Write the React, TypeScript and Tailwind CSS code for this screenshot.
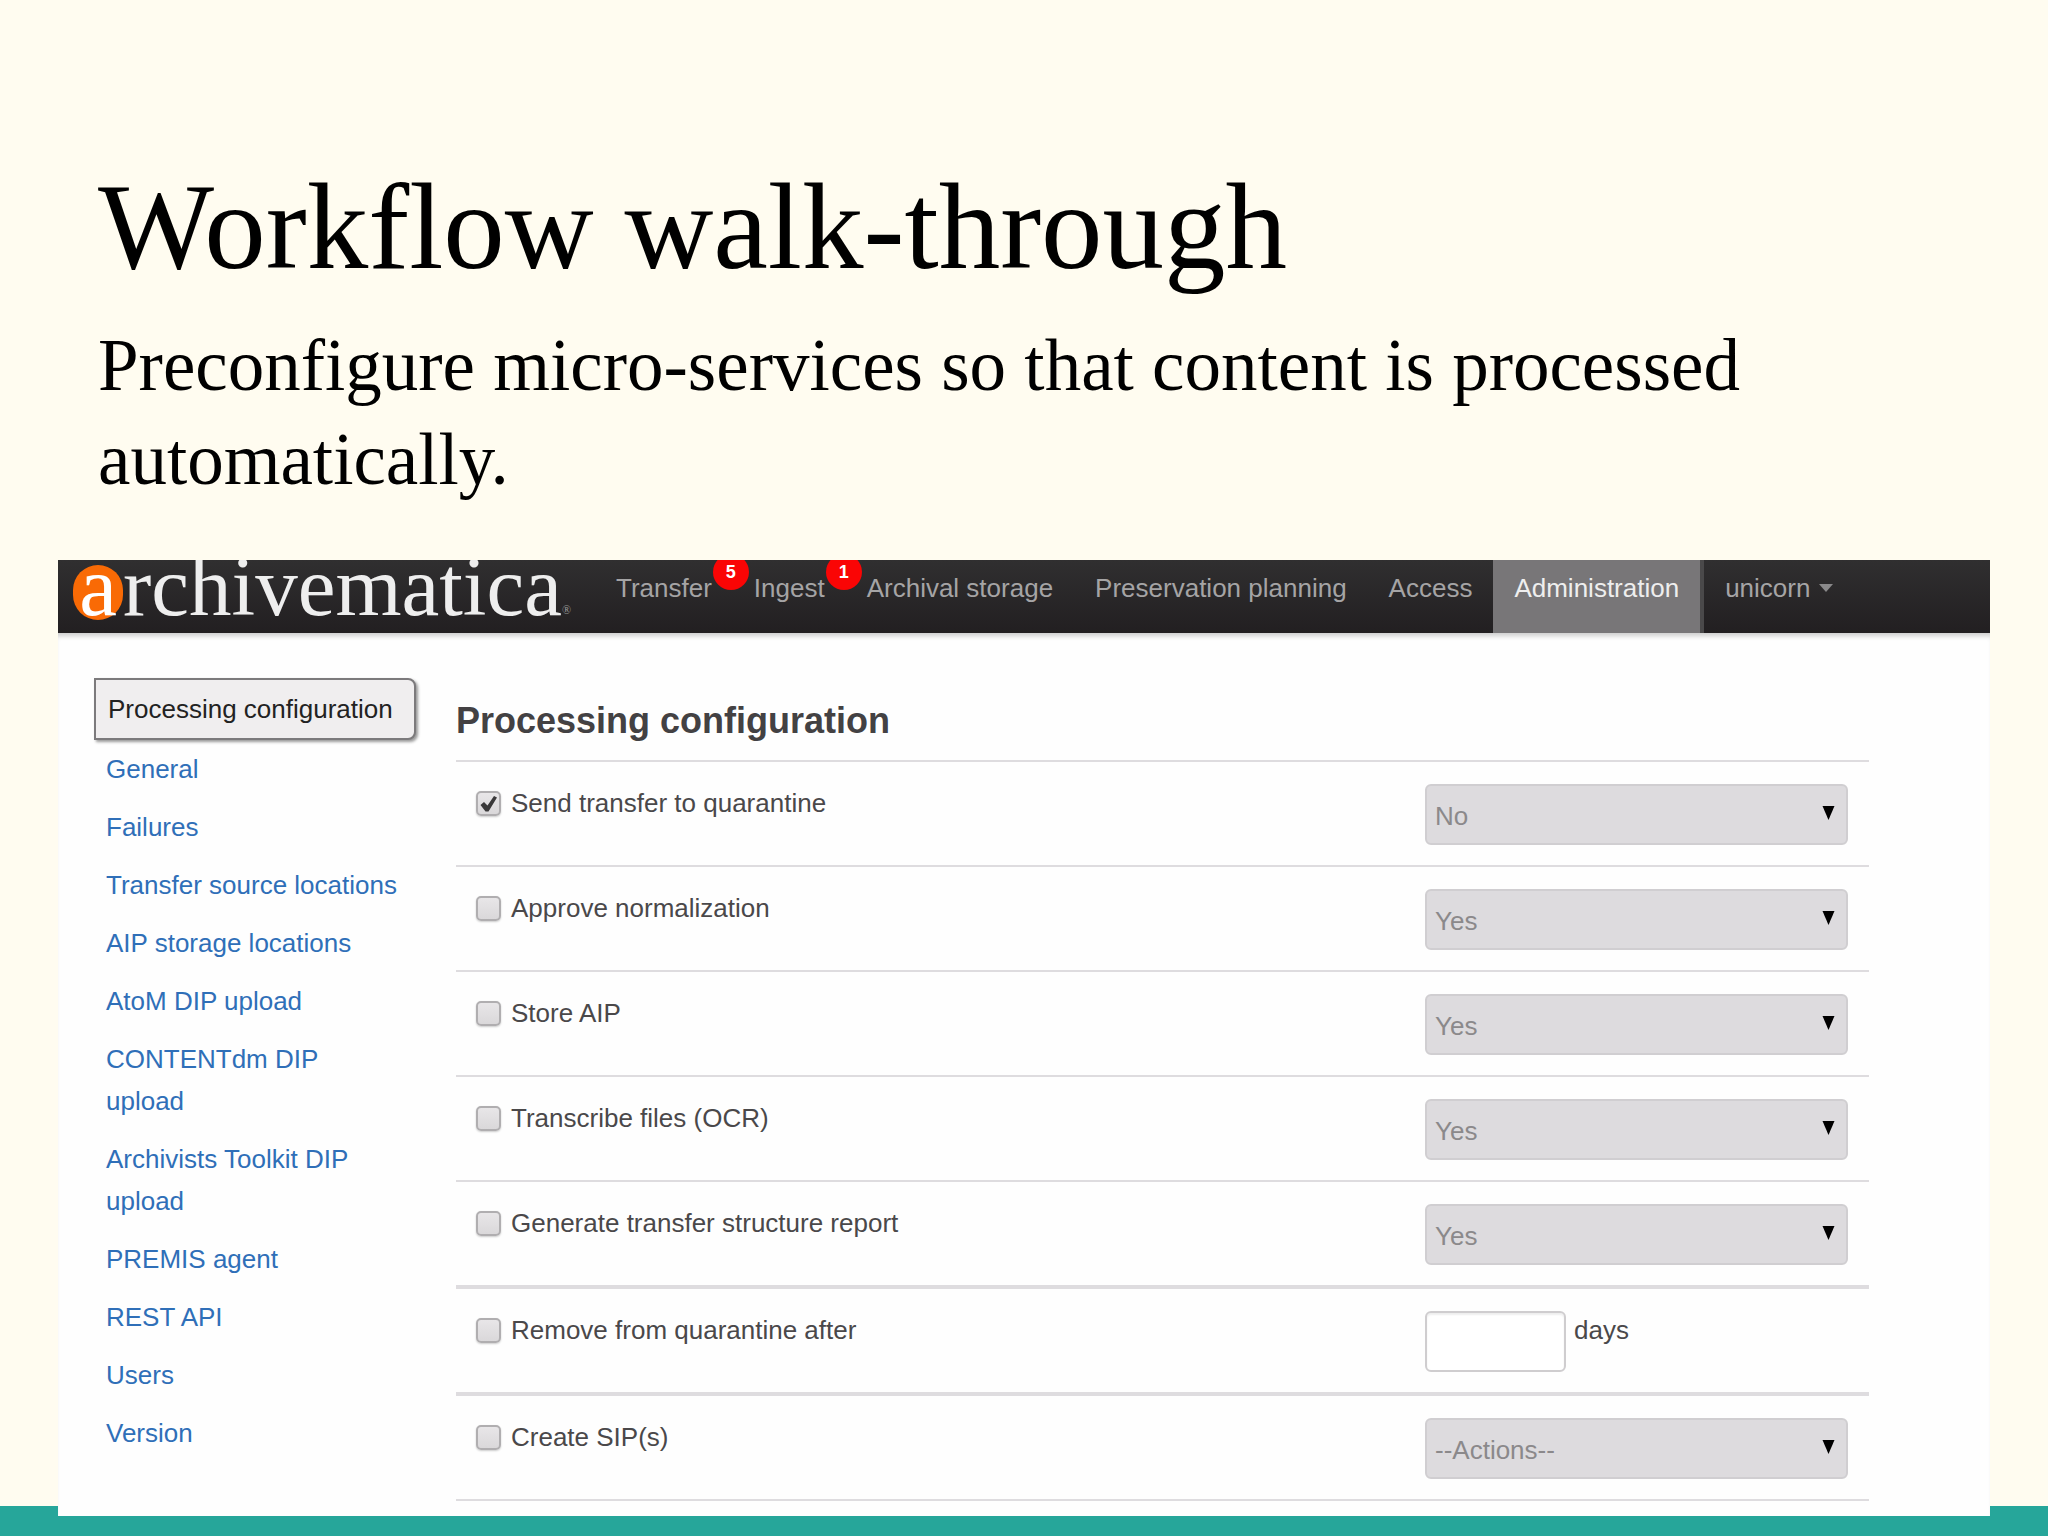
import { useState } from "react";

interface NavItem {
    label: string;
    badge?: number;
    active?: boolean;
}

interface Setting {
    id: string;
    label: string;
    value?: string;
    days?: boolean;
    checked?: boolean;
    thick?: boolean;
}

const navItems: NavItem[] = [
    { label: "Transfer", badge: 5 },
    { label: "Ingest", badge: 1 },
    { label: "Archival storage" },
    { label: "Preservation planning" },
    { label: "Access" },
    { label: "Administration", active: true },
];

const sideLinks = [
    "General",
    "Failures",
    "Transfer source locations",
    "AIP storage locations",
    "AtoM DIP upload",
    "CONTENTdm DIP upload",
    "Archivists Toolkit DIP upload",
    "PREMIS agent",
    "REST API",
    "Users",
    "Version",
];

const settings: Setting[] = [
    { id: "quarantine", label: "Send transfer to quarantine", value: "No", checked: true },
    { id: "normalization", label: "Approve normalization", value: "Yes" },
    { id: "store-aip", label: "Store AIP", value: "Yes" },
    { id: "ocr", label: "Transcribe files (OCR)", value: "Yes" },
    { id: "report", label: "Generate transfer structure report", value: "Yes", thick: true },
    { id: "remove", label: "Remove from quarantine after", days: true, thick: true },
    { id: "create-sip", label: "Create SIP(s)", value: "--Actions--" },
];

function Logo() {
    return (
        <a
            href="#"
            className="flex h-[73px] w-[537px] shrink-0 items-start pl-[15px] font-['Liberation_Serif',serif] text-[85px] leading-[52px] text-[#eeeeee]"
        >
            <span className="relative flex w-[50px] justify-center">
                <span className="absolute top-[5px] left-0 h-[55px] w-[50px] rounded-full bg-[#f96a05]" />
                <span className="relative text-white">a</span>
            </span>
            <span>rchivematica</span>
            <span className="pt-[42px] text-[12px] leading-4 text-[#999999]">®</span>
        </a>
    );
}

function TopNav() {
    return (
        <header className="relative flex h-[73px] overflow-hidden bg-linear-to-b from-[#302f30] to-[#221f21]">
            <Logo />
            <nav className="flex">
                <ul className="flex text-[26px] leading-[56px] whitespace-nowrap text-[#a5a4a5]">
                    {navItems.map((item) => (
                        <li
                            key={item.label}
                            className={
                                item.active
                                    ? "relative h-[73px] border-r-4 border-[#4a494a] bg-[#787678] text-[#eeeeee]"
                                    : "relative h-[73px]"
                            }
                        >
                            <a href="#" className="block px-[21px]">
                                {item.label}
                            </a>
                            {item.badge && (
                                <span className="absolute -top-[6px] -right-4 flex size-9 items-center justify-center rounded-full bg-[#fa0505] text-[18px] leading-9 font-bold text-white">
                                    {item.badge}
                                </span>
                            )}
                        </li>
                    ))}
                    <li>
                        <button type="button" className="flex items-center gap-2 px-[21px]">
                            unicorn
                            <svg width="16" height="8" viewBox="0 0 16 8" aria-hidden="true">
                                <path d="M1 0h14L8 8z" fill="#8a898a" />
                            </svg>
                        </button>
                    </li>
                </ul>
            </nav>
        </header>
    );
}

function Sidebar() {
    return (
        <aside className="w-[322px] shrink-0 pt-[45px] text-[26px] leading-[42px]">
            <ul>
                <li>
                    <a
                        href="#"
                        className="block rounded-r-lg border-2 border-[#7c7a7c] bg-[#f0eeef] py-2 pl-3 whitespace-nowrap text-[#222222] shadow-[2px_2px_3px_#999999]"
                    >
                        Processing configuration
                    </a>
                </li>
                {sideLinks.map((link) => (
                    <li key={link}>
                        <a href="#" className="block py-2 pr-[14px] pl-3 text-[#2f6fb8]">
                            {link}
                        </a>
                    </li>
                ))}
            </ul>
        </aside>
    );
}

function SettingRow({ setting }: { setting: Setting }) {
    const [checked, setChecked] = useState(!!setting.checked);

    return (
        <div
            className={
                setting.thick
                    ? "flex items-start justify-between border-b-4 border-[#dedcdf] pr-[21px] pl-5"
                    : "flex items-start justify-between border-b-2 border-[#dedcdf] pr-[21px] pl-5"
            }
        >
            <div className="flex h-[103px] items-start gap-[10px] pt-5">
                <span className="relative mt-[9px] size-[25px]">
                    <input
                        id={setting.id}
                        type="checkbox"
                        checked={checked}
                        onChange={(e) => setChecked(e.target.checked)}
                        className="block size-[25px] appearance-none rounded-[5px] border-2 border-[#b0aeb0] bg-linear-to-b from-[#e8e6e8] to-[#dad8da] shadow-[0_1px_2px_#cccccc]"
                    />
                    {checked && (
                        <svg
                            className="pointer-events-none absolute inset-0"
                            width="25"
                            height="25"
                            viewBox="0 0 25 25"
                            aria-hidden="true"
                        >
                            <path d="M4.500 14l3.500-3 3.500 3.500L18 5l3 1.500-8.500 14h-3z" fill="#3a393a" />
                        </svg>
                    )}
                </span>
                <label htmlFor={setting.id}>{setting.label}</label>
            </div>

            <div className="flex w-[423px] items-start gap-2 pt-[22px]">
                {setting.days ? (
                    <>
                        <input
                            id="days"
                            type="text"
                            aria-label="Days in quarantine"
                            className="h-[61px] w-[141px] rounded-md border-2 border-[#cfcdcf] bg-white px-2 shadow-[inset_0_2px_2px_#eeeeee]"
                        />
                        <label htmlFor="days" className="leading-[38px]">
                            days
                        </label>
                    </>
                ) : (
                    <div className="relative w-full">
                        <select
                            disabled
                            aria-label={setting.label}
                            className="h-[61px] w-full appearance-none rounded-md border-2 border-[#d0ced1] bg-[#dddbde] pt-[2px] pl-2 text-[#8b898b] opacity-100"
                        >
                            <option>{setting.value}</option>
                        </select>
                        <svg
                            className="pointer-events-none absolute top-[22px] right-[13px]"
                            width="13"
                            height="14"
                            viewBox="0 0 13 14"
                            aria-hidden="true"
                        >
                            <path d="M0.500 0h12L6.500 14z" fill="#000000" />
                        </svg>
                    </div>
                )}
            </div>
        </div>
    );
}

export default function App() {
    return (
        <div className="flex min-h-screen flex-col bg-[#fffcf0]">
            <div className="px-[98px] pt-[155px] font-['Liberation_Serif',serif] text-black">
                <h1 className="text-[123px] leading-[144px]">Workflow walk-through</h1>
                <p className="mt-5 text-[73px] leading-[94px]">
                    Preconfigure micro-services so that content is processed automatically.
                </p>
            </div>

            <main className="relative z-10 mx-[58px] mt-[53px] bg-[#fefefe] font-['Liberation_Sans',Arial,sans-serif]">
                <TopNav />
                <div className="flex gap-10 pr-[121px] pb-[15px] pl-9 shadow-[inset_0_6px_5px_-3px_#cccccc]">
                    <Sidebar />
                    <section className="min-w-0 grow pt-16 text-[26px] leading-[42px] text-[#4a484a]">
                        <h2 className="border-b-2 border-[#dedcdf] pb-[15px] text-[36px] leading-[48px] font-bold text-[#434143]">
                            Processing configuration
                        </h2>
                        {settings.map((setting) => (
                            <SettingRow key={setting.id} setting={setting} />
                        ))}
                    </section>
                </div>
            </main>

            <footer className="-mt-[10px] min-h-[30px] grow bg-[#26a69a]" />
        </div>
    );
}
